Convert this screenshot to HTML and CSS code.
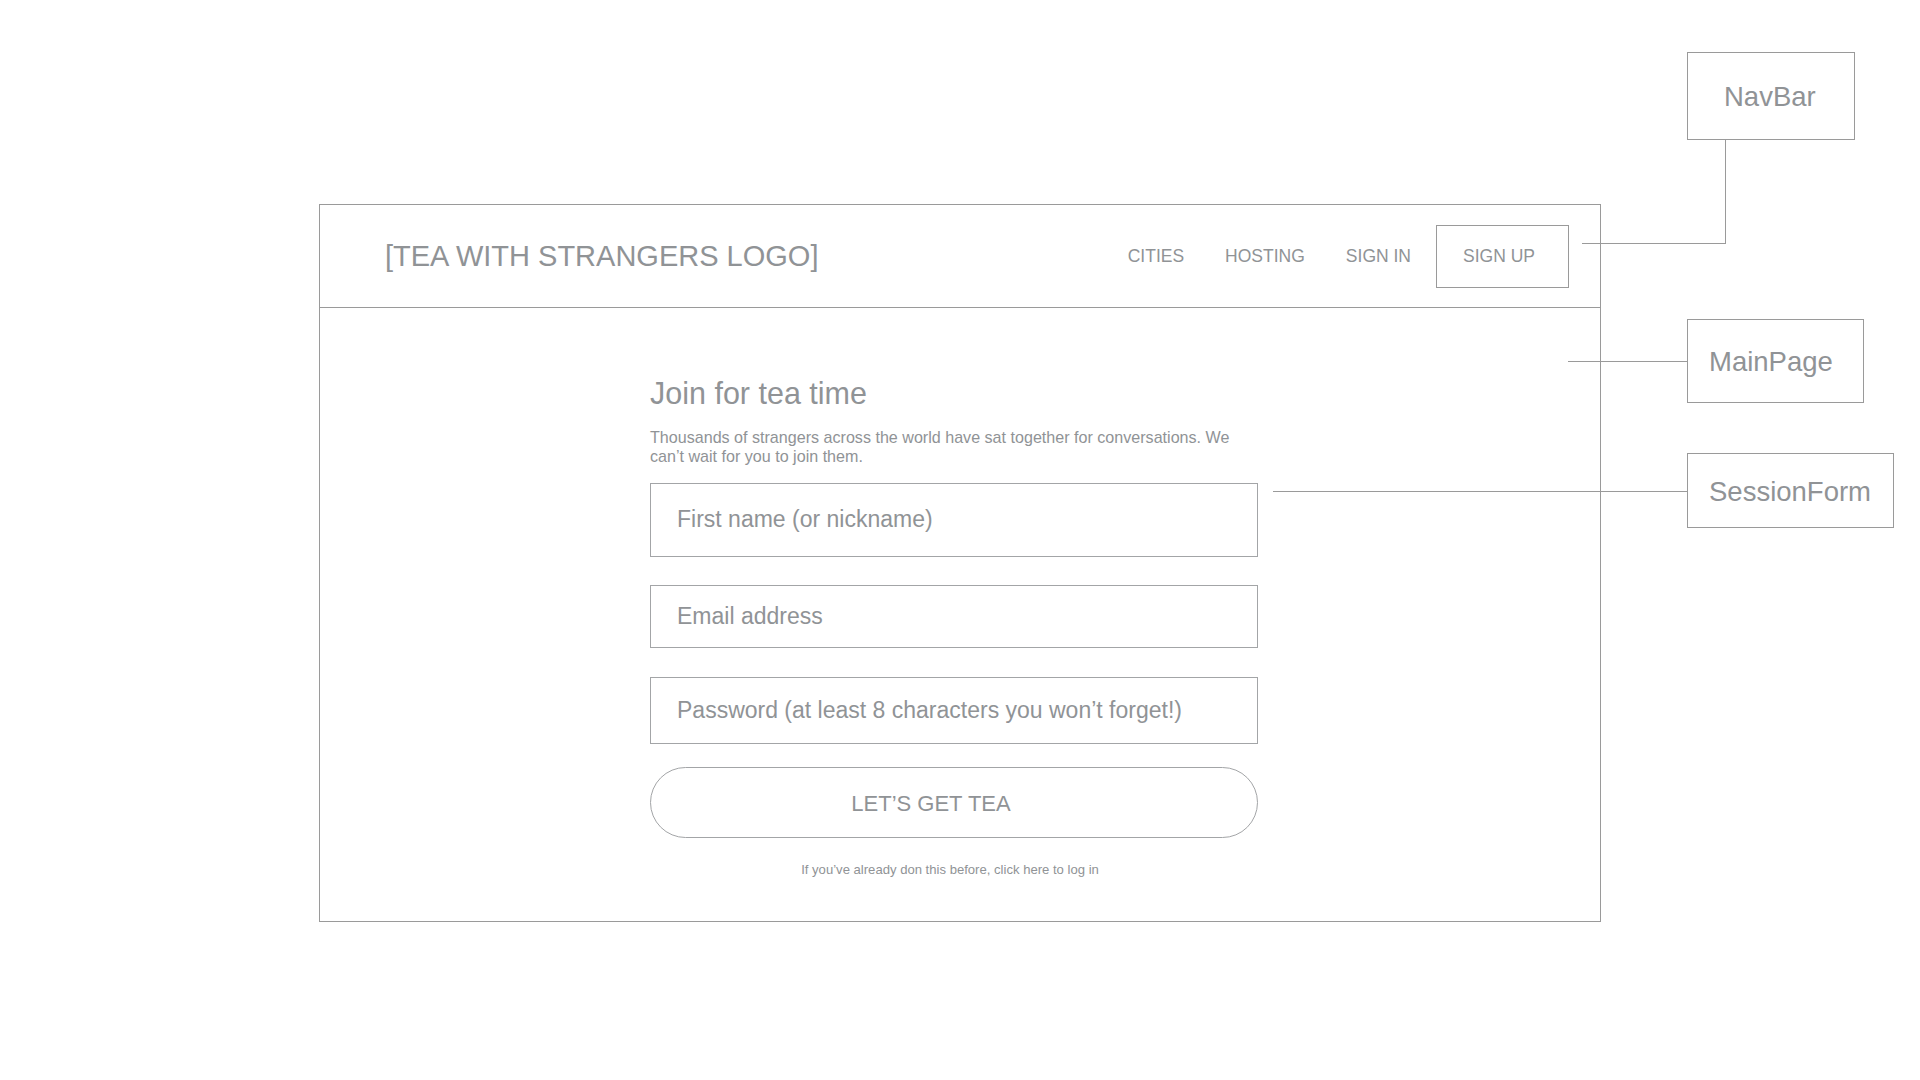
FILE: index.html
```html
<!DOCTYPE html>
<html lang="en">
<head>
<meta charset="utf-8">
<title>Tea With Strangers – Sign up wireframe</title>
<link rel="stylesheet" href="styles.css">
</head>
<body>
<div class="canvas">
  <div class="frame">
    <header class="navbar">
      <div class="logo">[TEA WITH STRANGERS LOGO]</div>
      <nav class="nav">
        <div class="nav-links">
          <a class="nav-link">CITIES</a>
          <a class="nav-link">HOSTING</a>
          <a class="nav-link">SIGN IN</a>
        </div>
        <a class="nav-signup">SIGN UP</a>
      </nav>
    </header>
    <main class="main-page">
      <form class="session-form">
        <h1 class="form-title">Join for tea time</h1>
        <p class="form-intro">Thousands of strangers across the world have sat together for conversations. We can’t wait for you to join them.</p>
        <div class="field field-name">First name (or nickname)</div>
        <div class="field field-email">Email address</div>
        <div class="field field-password">Password (at least 8 characters you won’t forget!)</div>
        <button type="button" class="submit">LET’S GET TEA</button>
        <p class="login-hint">If you’ve already don this before, click here to log in</p>
      </form>
    </main>
  </div>

  <div class="connector connector-navbar"></div>
  <div class="connector connector-main"></div>
  <div class="connector connector-form"></div>

  <div class="label label-navbar">NavBar</div>
  <div class="label label-main">MainPage</div>
  <div class="label label-form">SessionForm</div>
</div>
</body>
</html>
```

FILE: styles.css
```css
* {
  box-sizing: border-box;
}

html, body {
  margin: 0;
  padding: 0;
  background: #ffffff;
}

body {
  font-family: "Liberation Sans", Arial, Helvetica, sans-serif;
  color: #909396;
}

.canvas {
  position: relative;
  width: 1920px;
  height: 1080px;
  padding-top: 204px;
  padding-left: 319px;
}

.frame {
  width: 1282px;
  height: 718px;
  border: 1px solid #9a9a9a;
  display: flex;
  flex-direction: column;
}

.navbar {
  height: 103px;
  border-bottom: 1px solid #9a9a9a;
  display: flex;
  align-items: center;
  justify-content: space-between;
  padding: 0 31px 0 65px;
}

.logo {
  font-size: 29px;
  line-height: 34px;
  white-space: nowrap;
}

.nav {
  display: flex;
  align-items: center;
  gap: 25px;
}

.nav-links {
  display: flex;
  align-items: center;
  gap: 41px;
}

.nav-link,
.nav-signup {
  font-size: 17.5px;
  line-height: 20px;
  white-space: nowrap;
  color: #909396;
}

.nav-signup {
  display: flex;
  align-items: center;
  height: 63px;
  width: 133px;
  padding-left: 26px;
  border: 1px solid #9a9a9a;
}

.main-page {
  flex: 1;
  padding-top: 68px;
  padding-left: 330px;
}

.session-form {
  width: 608px;
  margin: 0;
}

.form-title {
  margin: 0;
  font-weight: normal;
  font-size: 30.5px;
  line-height: 34px;
}

.form-intro {
  margin: 18px 0 0;
  font-size: 16.1px;
  line-height: 18.5px;
}

.field {
  display: flex;
  align-items: center;
  width: 100%;
  padding-left: 26px;
  border: 1px solid #a3a5a7;
  font-size: 23px;
  white-space: nowrap;
}

.field-name {
  margin-top: 18px;
  height: 74px;
  padding-bottom: 1px;
}

.field-email {
  margin-top: 28px;
  height: 63px;
}

.field-password {
  margin-top: 29px;
  height: 67px;
}

.submit {
  display: block;
  width: 100%;
  height: 71px;
  margin-top: 23px;
  padding: 3px 46px 0 0;
  background: #ffffff;
  border: 1px solid #a3a5a7;
  border-radius: 36px;
  font-family: "Liberation Sans", Arial, Helvetica, sans-serif;
  font-size: 22px;
  color: #909396;
  text-align: center;
}

.login-hint {
  margin: 24px 0 0;
  padding-right: 8px;
  font-size: 13.1px;
  line-height: 15px;
  text-align: center;
}

/* annotation connectors */
.connector {
  position: absolute;
  border-color: #9a9a9a;
  border-style: solid;
  border-width: 0;
}

.connector-navbar {
  left: 1582px;
  top: 139px;
  width: 144px;
  height: 105px;
  border-right-width: 1px;
  border-bottom-width: 1px;
}

.connector-main {
  left: 1568px;
  top: 361px;
  width: 119px;
  height: 1px;
  border-top-width: 1px;
}

.connector-form {
  left: 1273px;
  top: 491px;
  width: 414px;
  height: 1px;
  border-top-width: 1px;
}

/* annotation labels */
.label {
  position: absolute;
  display: flex;
  align-items: center;
  background: #ffffff;
  border: 1px solid #9a9a9a;
  font-size: 27.5px;
  white-space: nowrap;
}

.label-navbar {
  left: 1687px;
  top: 52px;
  width: 168px;
  height: 88px;
  padding-left: 36px;
  padding-top: 2px;
}

.label-main {
  left: 1687px;
  top: 319px;
  width: 177px;
  height: 84px;
  padding-left: 21px;
  padding-top: 2px;
}

.label-form {
  left: 1687px;
  top: 453px;
  width: 207px;
  height: 75px;
  padding-left: 21px;
  padding-top: 2px;
}
```
